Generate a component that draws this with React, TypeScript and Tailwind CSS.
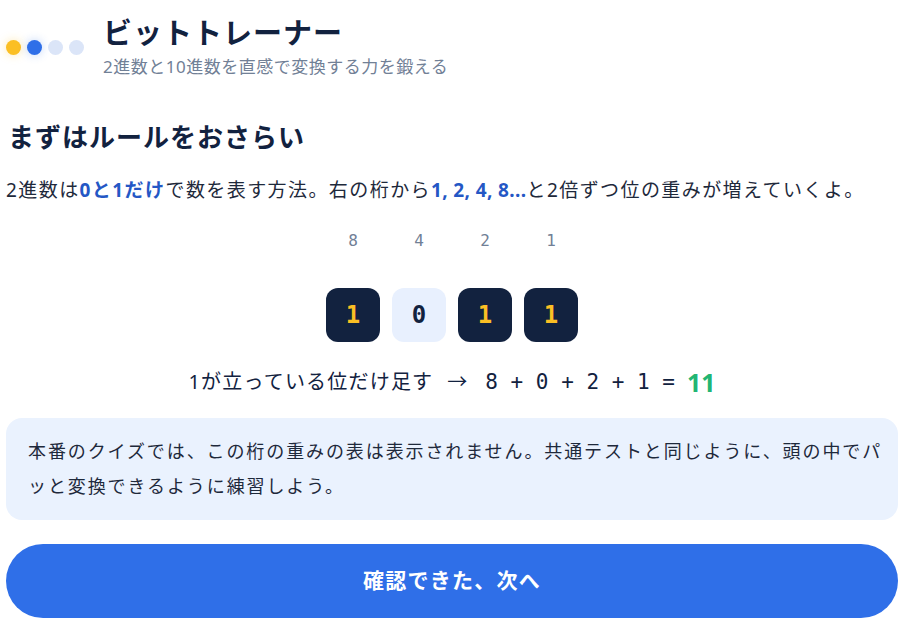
import React from "react";

const sans = '"Noto Sans", "Noto Sans CJK JP", sans-serif';
const mono = '"DejaVu Sans Mono", "Noto Sans CJK JP", monospace';

function Tile({ v }: { v: string }) {
  const on = v === "1";
  return (
    <div
      className={`w-[54px] h-[54px] rounded-[12px] flex items-center justify-center text-[24px] font-bold ${
        on ? "bg-[#12223f] text-[#fbbf24]" : "bg-[#e8f0fe] text-[#12223f]"
      }`}
      style={{ fontFamily: mono }}
    >
      {v}
    </div>
  );
}

export default function App() {
  const bits = ["1", "0", "1", "1"];
  const weights = ["8", "4", "2", "1"];
  return (
    <div className="bg-white min-h-[635px] pl-[6px] pr-[13px] text-[#12223f]" style={{ fontFamily: sans }}>
      <header className="flex items-start pt-[13px]">
        <div className="flex items-center gap-[6px] w-[97px] mt-[27px]">
          <span className="w-[15px] h-[15px] rounded-full bg-[#fbbf24] shadow-[0_0_10px_rgba(251,191,36,0.35)]" />
          <span className="w-[15px] h-[15px] rounded-full bg-[#2f6fe8] shadow-[0_0_10px_rgba(47,111,232,0.3)]" />
          <span className="w-[15px] h-[15px] rounded-full bg-[#dbe5f8]" />
          <span className="w-[15px] h-[15px] rounded-full bg-[#dbe5f8]" />
        </div>
        <div className="flex flex-col">
          <h1 className="text-[29px] font-bold leading-[40px] tracking-[1px] text-[#12223f]">ビットトレーナー</h1>
          <p className="mt-[1px] text-[17px] leading-[26px] tracking-[0.03em] text-[#718096]">2進数と10進数を直感で変換する力を鍛える</p>
        </div>
      </header>

      <h2 className="mt-[39px] pl-[2px] text-[26px] font-bold leading-[36px] tracking-[1px] text-[#12223f]">まずはルールをおさらい</h2>

      <p className="mt-[19px] text-[19px] leading-[32px] tracking-[0.075em] text-[#1e293b] whitespace-nowrap">
        2進数は<span className="font-bold text-[#2457c5]">0と1だけ</span>で数を表す方法。右の桁から
        <span className="font-bold tracking-[0.02em] text-[#2457c5]">1, 2, 4, 8...</span>と2倍ずつ位の重みが増えていくよ。
      </p>

      <div className="flex flex-col items-center">
        <div className="mt-[23px] flex gap-[12px] leading-[24px]">
          {weights.map((w) => (
            <div key={w} className="w-[54px] text-center text-[16px] text-[#718096]" style={{ fontFamily: mono }}>
              {w}
            </div>
          ))}
        </div>
        <div className="mt-[35px] flex gap-[12px]">
          {bits.map((b, i) => (
            <Tile key={i} v={b} />
          ))}
        </div>
        <div className="mt-[24px] flex items-center text-[20px] leading-[32px]">
          <span className="tracking-[0.06em] text-[#12223f]">1が立っている位だけ足す</span>
          <span className="ml-[14px] text-[20px] text-[#12223f]">→</span>
          <span className="ml-[18px] text-[21px] text-[#12223f]" style={{ fontFamily: mono }}>
            8 + 0 + 2 + 1 =
          </span>
          <span className="ml-[12px] text-[25px] font-bold text-[#22b573]">11</span>
        </div>
      </div>

      <div className="mt-[20px] rounded-[16px] bg-[#eaf2fe] px-[22px] py-[16px] text-[18px] leading-[35px] tracking-[1.9px] text-[#1e293b]">
        <span className="whitespace-nowrap">本番のクイズでは、この桁の重みの表は表示されません。共通テストと同じように、頭の中でパ</span>
        <br />
        <span className="whitespace-nowrap">ッと変換できるように練習しよう。</span>
      </div>

      <button className="mt-[24px] w-full h-[74px] rounded-full bg-[#2f6fe8] text-white text-[21px] font-bold tracking-[0.06em]">
        確認できた、次へ
      </button>
    </div>
  );
}
